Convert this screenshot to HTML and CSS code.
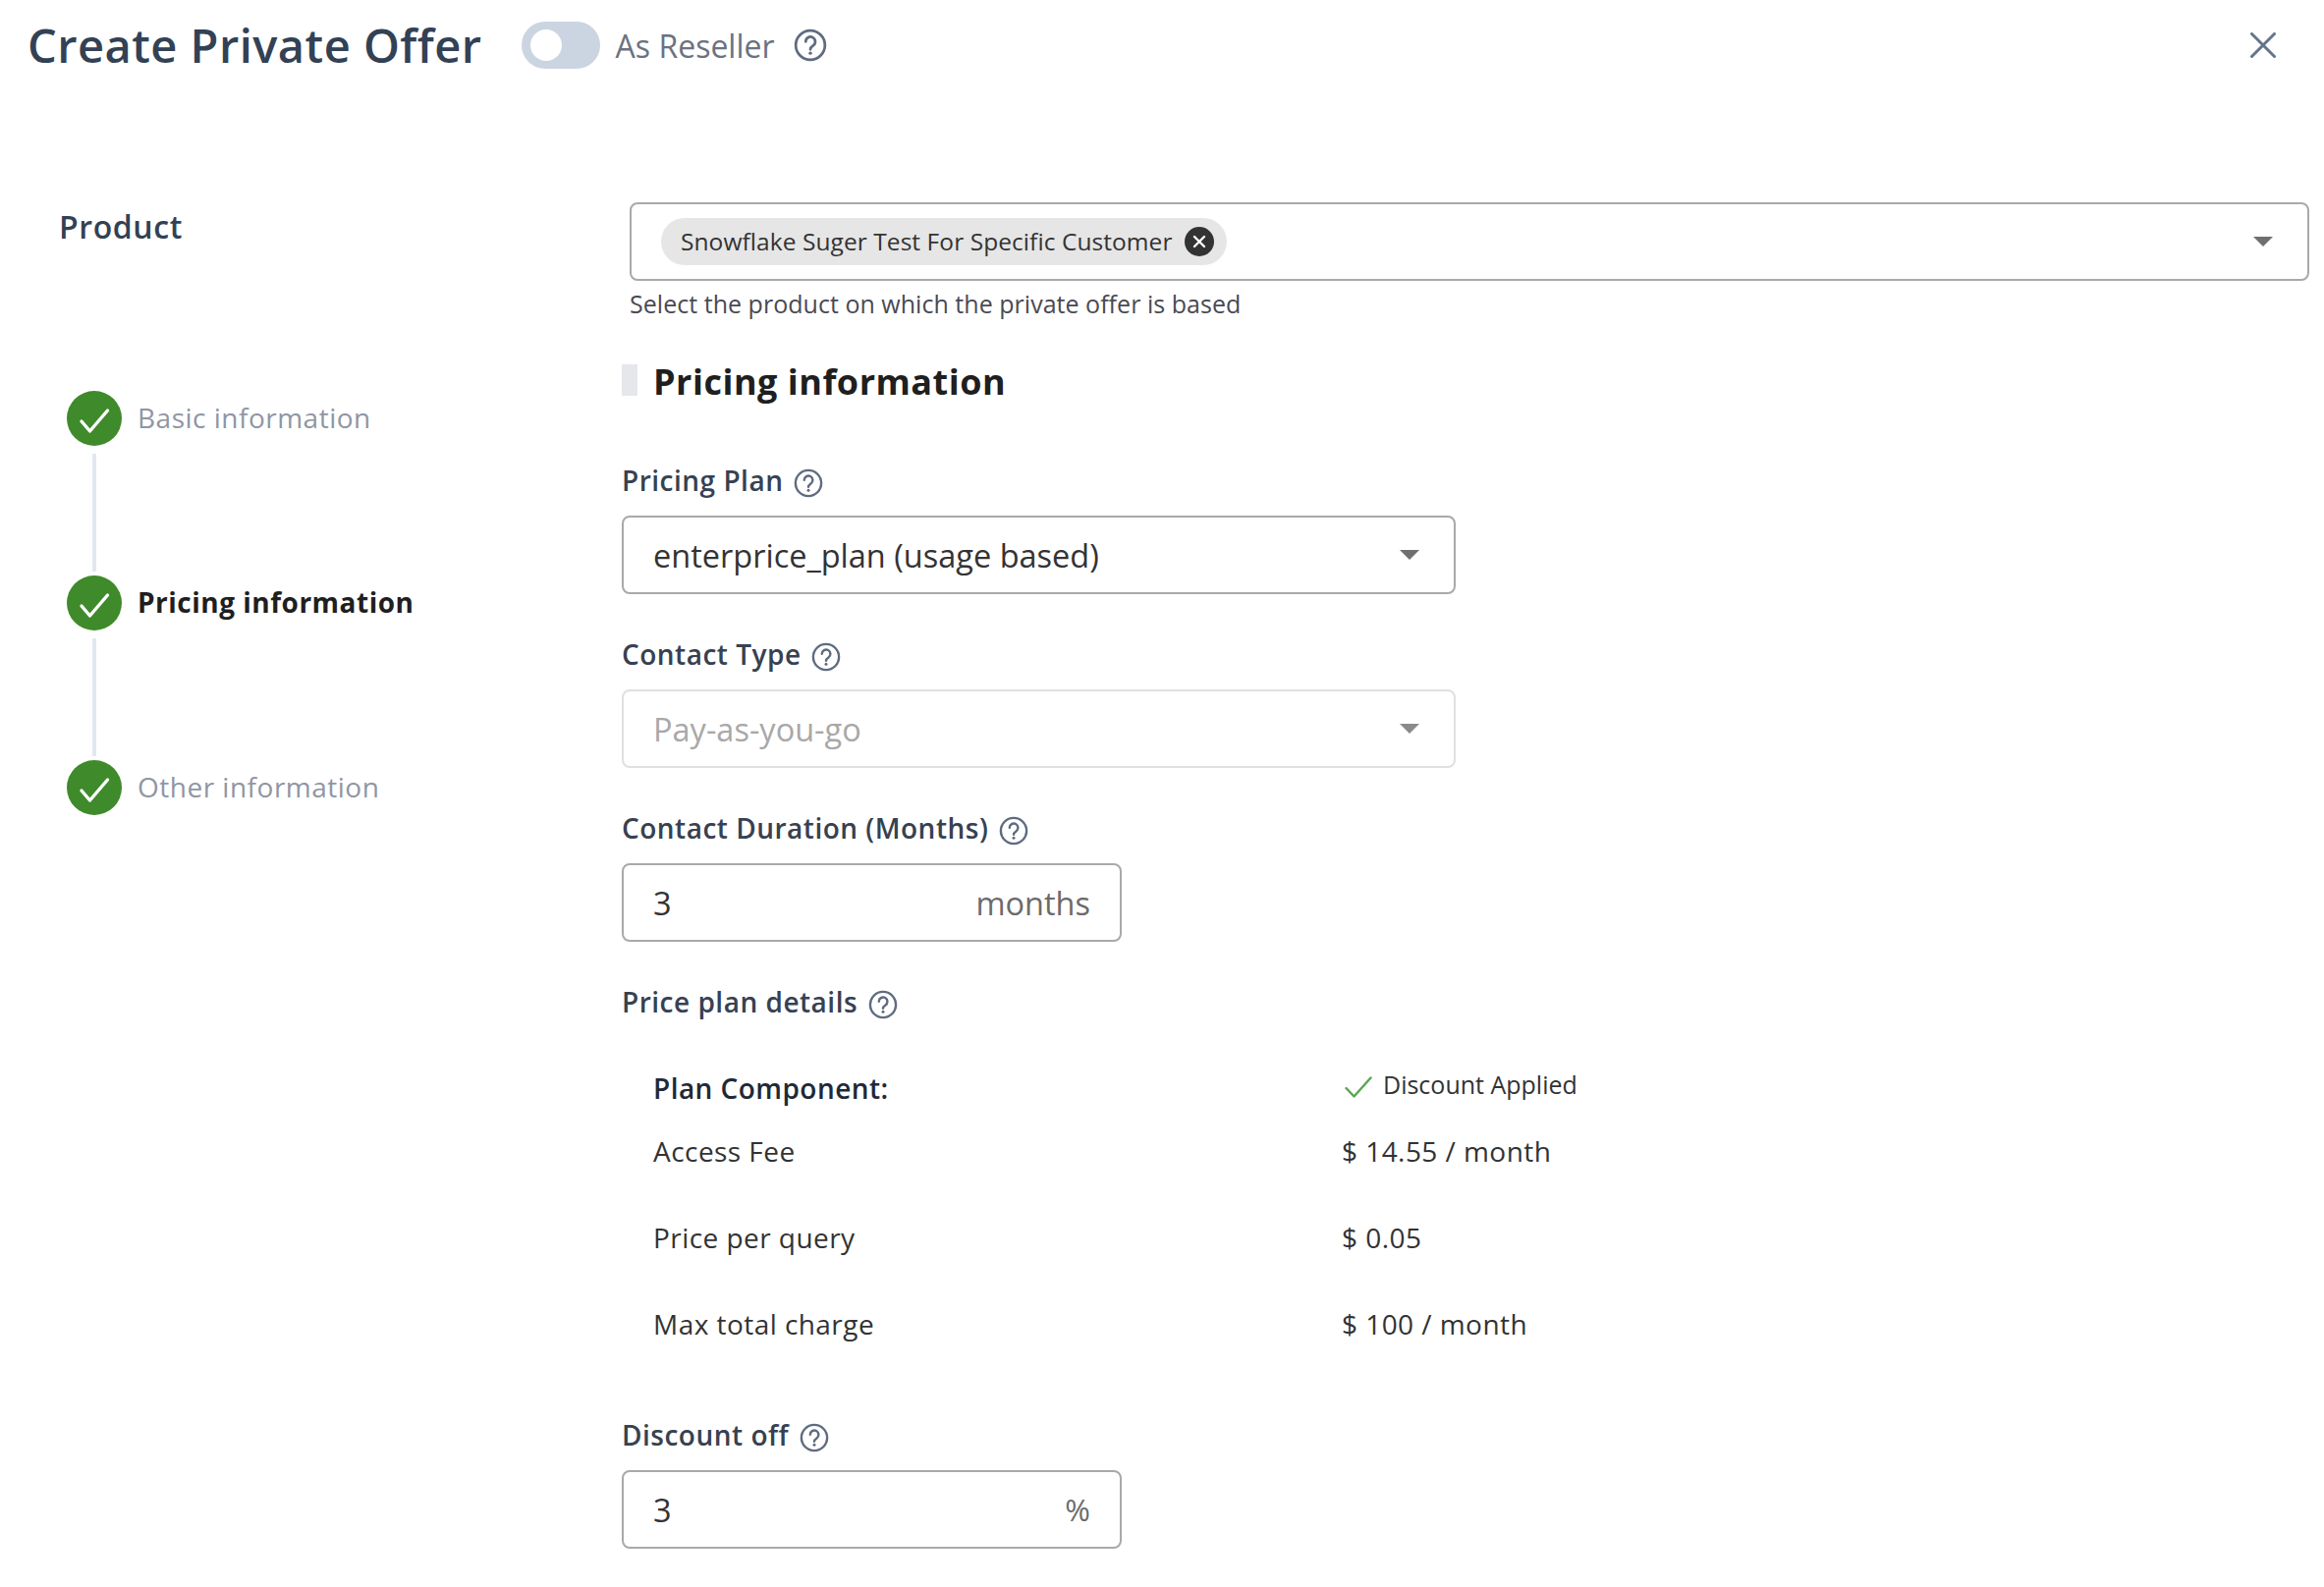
FILE: index.html
```html
<!DOCTYPE html>
<html lang="en">
<head>
<meta charset="utf-8">
<title>Create Private Offer</title>
<link rel="stylesheet" href="styles.css">
</head>
<body>
<svg class="defs" width="0" height="0" aria-hidden="true">
  <symbol id="help" viewBox="0 0 30 30">
    <circle cx="15" cy="15" r="13.1" fill="none" stroke="currentColor" stroke-width="2.4"/>
    <path d="M10.8 11.8a4.3 4.3 0 1 1 6.7 3.6c-1.5 1-2.5 1.7-2.5 3.4" fill="none" stroke="currentColor" stroke-width="2.4" stroke-linecap="round"/>
    <circle cx="15" cy="22.2" r="1.5" fill="currentColor"/>
  </symbol>
  <symbol id="caret" viewBox="0 0 20 10"><path d="M0 0h20L10 10z" fill="currentColor"/></symbol>
  <symbol id="tick" viewBox="0 0 56 56"><path d="M15 31l8.500 10L41.500 20" fill="none" stroke="#fff" stroke-width="3.4" stroke-linecap="round" stroke-linejoin="round"/></symbol>
</svg>

<header class="header">
  <h1 class="title">Create Private Offer</h1>
  <span class="toggle"><span class="knob"></span></span>
  <span class="reseller">As Reseller</span>
  <svg class="help help-lg"><use href="#help"/></svg>
  <svg class="close" viewBox="0 0 26 26"><path d="M1.5 1.5l23 23M24.5 1.500l-23 23" fill="none" stroke="currentColor" stroke-width="3" stroke-linecap="round"/></svg>
</header>

<main class="layout">
  <aside class="aside">
    <div class="product-label">Product</div>
    <ol class="steps">
      <li class="step"><svg class="badge"><use href="#tick"/></svg><span>Basic information</span></li>
      <li class="connector"></li>
      <li class="step step-active"><svg class="badge"><use href="#tick"/></svg><span>Pricing information</span></li>
      <li class="connector"></li>
      <li class="step"><svg class="badge"><use href="#tick"/></svg><span>Other information</span></li>
    </ol>
  </aside>

  <section class="content">
    <div class="product-select">
      <span class="chip"><span class="chip-text">Snowflake Suger Test For Specific Customer</span>
        <svg class="chip-x" viewBox="0 0 30 30"><circle cx="15" cy="15" r="15" fill="#333"/><path d="M10 10l10 10M20 10L10 20" stroke="#fff" stroke-width="2.400" stroke-linecap="round"/></svg>
      </span>
      <svg class="caret"><use href="#caret"/></svg>
    </div>
    <p class="hint">Select the product on which the private offer is based</p>

    <h2 class="section"><span class="section-bar"></span><span class="section-text">Pricing information</span></h2>

    <div class="field">
      <div class="label">Pricing Plan <svg class="help"><use href="#help"/></svg></div>
      <div class="control wide"><span>enterprice_plan (usage based)</span><svg class="caret"><use href="#caret"/></svg></div>
    </div>

    <div class="field">
      <div class="label">Contact Type <svg class="help"><use href="#help"/></svg></div>
      <div class="control wide disabled"><span>Pay-as-you-go</span><svg class="caret"><use href="#caret"/></svg></div>
    </div>

    <div class="field">
      <div class="label">Contact Duration (Months) <svg class="help"><use href="#help"/></svg></div>
      <div class="control narrow"><span>3</span><span class="unit">months</span></div>
    </div>

    <div class="field">
      <div class="label">Price plan details <svg class="help"><use href="#help"/></svg></div>
      <div class="plan">
        <div class="plan-head">Plan Component:</div>
        <div class="plan-applied">
          <svg class="applied-tick" viewBox="0 0 28 22"><path d="M1.500 12l8 8.500L26.500 1.500" fill="none" stroke="#5aa550" stroke-width="2.400" stroke-linecap="round" stroke-linejoin="round"/></svg>
          Discount Applied
        </div>
        <div class="plan-cell">Access Fee</div><div class="plan-cell">$ 14.55 / month</div>
        <div class="plan-cell">Price per query</div><div class="plan-cell">$ 0.05</div>
        <div class="plan-cell">Max total charge</div><div class="plan-cell">$ 100 / month</div>
      </div>
    </div>

    <div class="field">
      <div class="label">Discount off <svg class="help"><use href="#help"/></svg></div>
      <div class="control narrow"><span>3</span><span class="unit unit-small">%</span></div>
    </div>
  </section>
</main>
</body>
</html>
```
FILE: styles.css
```css
* { box-sizing: border-box; }
html, body { margin: 0; padding: 0; height: 100%; background: #fff; overflow: hidden; }
body { font-family: "Open Sans", sans-serif; color: #1f2937; }
.defs { position: absolute; }

.header { height: 92px; padding: 0 49px 0 28px; display: flex; align-items: center; }
.title { margin: 0; font-size: 47px; font-weight: 600; color: #334155; letter-spacing: .47px; line-height: 60px; }
.toggle { width: 80px; height: 48px; margin-left: 40px; border-radius: 24px; background: #cbd5e1; padding: 8px 9px; display: flex; }
.knob { width: 32px; height: 32px; border-radius: 50%; background: #fff; }
.reseller { margin-left: 16px; font-size: 32px; color: #6b7280; }
.help { width: 30px; height: 30px; color: #5f6b7f; vertical-align: -7px; margin-left: 3px; flex: none; }
.help-lg { width: 34px; height: 34px; margin-left: 19px; }
.close { width: 26px; height: 26px; margin-left: auto; color: #64748b; }

.layout { display: flex; padding-top: 114px; }
.aside { width: 633px; padding-left: 60px; flex: none; }
.product-label { margin-top: 3px; font-size: 32px; line-height: 44px; font-weight: 600; color: #334155; letter-spacing: .6px; }
.steps { list-style: none; margin: 145px 0 0 8px; padding: 0; }
.step { display: flex; align-items: center; height: 56px; gap: 16px; font-size: 28px; color: #8f96a3; letter-spacing: .5px; }
.step span { padding-bottom: 2px; }
.step-active { font-weight: 700; color: #1f1f1f; }
.badge { width: 56px; height: 56px; border-radius: 50%; background: #3f8a2b; }
.connector { width: 4px; height: 120px; margin: 8px 0 4px 26px; background: #e2e8f0; }

.content { flex: 1; padding-right: 15px; }
.product-select { margin-left: 8px; height: 80px; border: 2px solid #a9a9a9; border-radius: 8px; padding: 0 35px 0 30px; display: flex; align-items: center; justify-content: space-between; }
.chip { height: 48px; padding: 0 12px 0 20px; border-radius: 24px; background: #e6e6e6; display: flex; align-items: center; gap: 12px; font-size: 24.5px; letter-spacing: .07px; color: #333; white-space: nowrap; }
.chip-text { padding-bottom: 2px; }
.chip-x { width: 30px; height: 30px; margin-right: 1px; }
.caret { width: 20px; height: 10px; color: #6f6f6f; flex: none; }
.hint { margin: 5px 0 0 8px; font-size: 25px; letter-spacing: .03px; line-height: 36px; color: #4a4a52; }
.section { margin: 36px 0 0; height: 48px; display: flex; align-items: center; gap: 16px; font-size: 36px; font-weight: 700; color: #1f1f1f; letter-spacing: .5px; line-height: 46px; }
.section-text { padding-top: 3px; }
.section-bar { width: 16px; height: 32px; background: #e5e7eb; }

.field { margin-top: 42px; }
.section + .field { margin-top: 59px; }
.label { height: 40px; line-height: 39px; font-size: 28px; font-weight: 600; color: #374151; letter-spacing: .5px; }
.control { height: 80px; margin-top: 15px; border: 2px solid #a9a9a9; border-radius: 8px; padding: 0 35px 0 30px; display: flex; align-items: center; justify-content: space-between; font-size: 32.5px; color: #333; }
.wide { width: 849px; }
.narrow { width: 509px; padding-right: 30px; }
.disabled { border-color: #e0e0e0; color: #a8a8a8; }
.disabled .caret { color: #8a8a8a; }
.unit { color: #6b6b6b; }
.unit-small { font-size: 31px; }

.plan { margin: 42px 0 49px; display: grid; grid-template-columns: 701px 1fr; padding-left: 32px; font-size: 28px; color: #333; letter-spacing: .45px; }
.plan-head { height: 46px; line-height: 50px; font-weight: 600; color: #1f2937; }
.plan-applied { height: 46px; display: flex; align-items: center; gap: 11px; padding-left: 3px; font-size: 25px; letter-spacing: 0; line-height: 42px; margin-top: -2px; }
.applied-tick { width: 28px; height: 22px; margin-top: 6px; }
.plan-cell { height: 88px; line-height: 86px; }
```
